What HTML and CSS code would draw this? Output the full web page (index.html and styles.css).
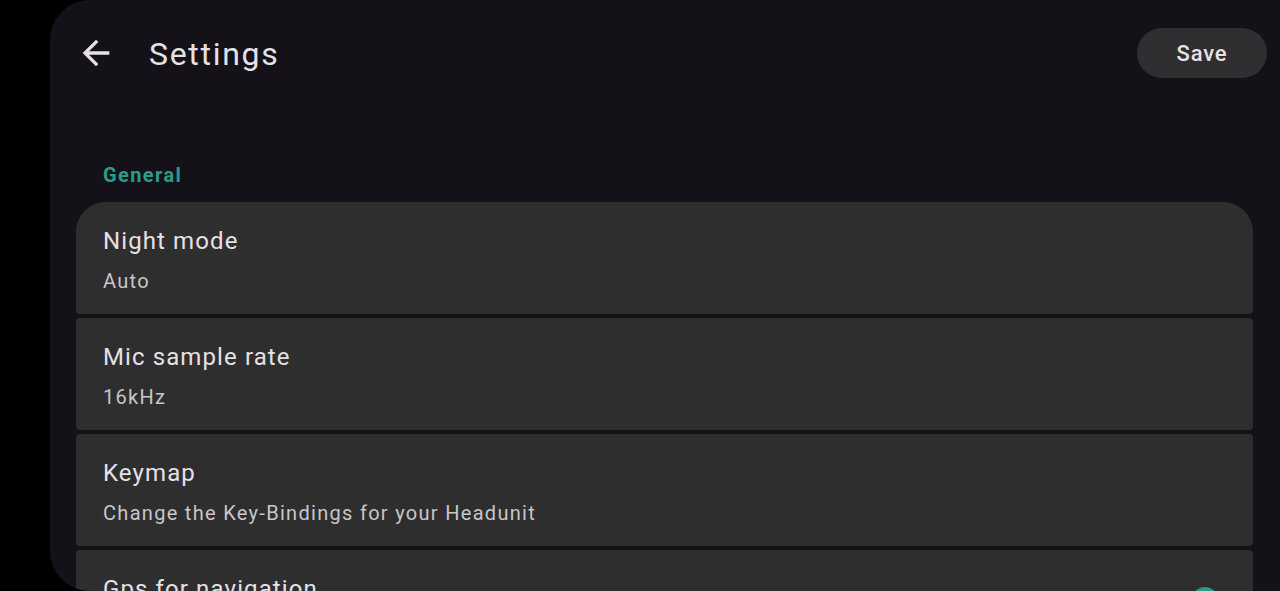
FILE: index.html
```html
<!DOCTYPE html>
<html lang="en">

<head>
  <meta charset="UTF-8" />
  <meta name="viewport" content="width=device-width, initial-scale=1.0" />
  <title>Settings</title>
  <link rel="stylesheet" href="styles.css">
</head>

<body>
  <div class="panel">
    <div class="toolbar">
      <button class="back" aria-label="Back">
        <svg viewBox="0 0 24 24" width="40" height="40">
          <path d="M20 11H7.83l5.59-5.59L12 4l-8 8 8 8 1.41-1.41L7.83 13H20v-2z" fill="#e6e1e5" />
        </svg>
      </button>
      <h1 class="title">Settings</h1>
      <button class="save">Save</button>
    </div>

    <h2 class="section">General</h2>

    <div class="list">
      <div class="item first">
        <div class="text">
          <div class="item-title">Night mode</div>
          <div class="item-sub">Auto</div>
        </div>
      </div>
      <div class="item">
        <div class="text">
          <div class="item-title">Mic sample rate</div>
          <div class="item-sub">16kHz</div>
        </div>
      </div>
      <div class="item">
        <div class="text">
          <div class="item-title">Keymap</div>
          <div class="item-sub">Change the Key-Bindings for your Headunit</div>
        </div>
      </div>
      <div class="item">
        <div class="text">
          <div class="item-title">Gps for navigation</div>
          <div class="item-sub">Use the phone's GPS for navigation</div>
        </div>
        <div class="switch on">
          <span class="track"></span>
          <span class="thumb"></span>
        </div>
      </div>
    </div>
  </div>
</body>

</html>
```

FILE: styles.css
```css
body {
  margin: 0;
  background-color: #000;
  font-family: Roboto, "Noto Sans", sans-serif;
  overflow: hidden;
}

.panel {
  margin-left: 50px;
  height: 591px;
  background-color: #141218;
  border-radius: 40px 0 0 40px;
  overflow: hidden;
  padding: 0 27px 0 26px;
}

.toolbar {
  display: flex;
  align-items: center;
  height: 104px;
  margin-right: -14px;
}

.back {
  background: none;
  border: none;
  padding: 0;
  width: 40px;
  height: 40px;
  margin-top: 2px;
  cursor: pointer;
}

.back svg {
  display: block;
}

.title {
  flex: 1;
  margin: 3px 0 0 33px;
  font-size: 32px;
  font-weight: 400;
  letter-spacing: 1.7px;
  color: #e6e1e5;
  line-height: 40px;
}

.save {
  width: 130px;
  height: 50px;
  margin-top: 2px;
  border: none;
  border-radius: 25px;
  background-color: #2f2e31;
  color: #e6e1e5;
  font-family: Roboto, sans-serif;
  font-size: 22px;
  font-weight: 500;
  letter-spacing: 0.8px;
  cursor: pointer;
}

.section {
  margin: 57px 0 13px 27px;
  font-size: 20px;
  line-height: 28px;
  font-weight: 700;
  letter-spacing: 1.4px;
  color: #2a9c88;
}

.list {
  display: flex;
  flex-direction: column;
  gap: 4px;
}

.item {
  display: flex;
  align-items: flex-start;
  background-color: #2e2e2e;
  border-radius: 4px;
  padding: 23px 27px 19px;
  flex-shrink: 0;
}

.item.first {
  border-radius: 30px 30px 4px 4px;
}

.text {
  flex: 1;
}

.item-title {
  font-size: 24px;
  line-height: 32px;
  letter-spacing: 1.1px;
  color: #e6e1e5;
}

.item-sub {
  margin-top: 10px;
  font-size: 20px;
  line-height: 28px;
  letter-spacing: 1.3px;
  color: #c9c5ca;
}

.switch {
  position: relative;
  width: 52px;
  height: 26px;
  margin-top: 14px;
  margin-right: 8px;
}

.switch .track {
  position: absolute;
  left: 4px;
  right: 4px;
  top: 5px;
  height: 16px;
  border-radius: 8px;
  background-color: #1d5e53;
}

.switch .thumb {
  position: absolute;
  right: 0;
  top: 0;
  width: 26px;
  height: 26px;
  border-radius: 50%;
  background-color: #2a9c88;
}
```
